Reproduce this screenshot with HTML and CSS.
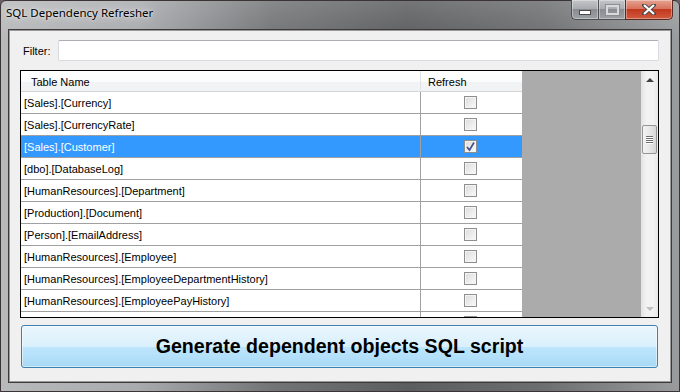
FILE: index.html
```html
<!DOCTYPE html>
<html>
<head>
  <meta charset="UTF-8">
  <title>SQL Dependency Refresher</title>
  <link rel="stylesheet" href="styles.css">
</head>
<body>
  <div class="window">
    <div class="titlebar">
      <span class="title">SQL Dependency Refresher</span>
      <div class="controls">
        <span class="ctl ctl-min"><i></i></span>
        <span class="ctl ctl-max"><i></i></span>
        <span class="ctl ctl-close">
          <svg width="14" height="11" viewBox="0 0 14 11">
            <path d="M2 1 L12 10 M12 1 L2 10" stroke="#4a4a4a" stroke-width="4" stroke-linecap="square"/>
            <path d="M2 1 L12 10 M12 1 L2 10" stroke="#fff" stroke-width="2.2"/>
          </svg>
        </span>
      </div>
    </div>

    <div class="client">
      <div class="filter">
        <label class="filter-label">Filter:</label>
        <div class="filter-input"></div>
      </div>

      <div class="grid">
        <div class="grid-body">
          <div class="grid-cols">
            <div class="row head">
              <div class="cell name">Table Name</div>
              <div class="cell refresh">Refresh</div>
            </div>
            <div class="row"><div class="cell name">[Sales].[Currency]</div><div class="cell refresh"><span class="chk"></span></div></div>
            <div class="row"><div class="cell name">[Sales].[CurrencyRate]</div><div class="cell refresh"><span class="chk"></span></div></div>
            <div class="row selected"><div class="cell name">[Sales].[Customer]</div><div class="cell refresh"><span class="chk checked"><svg width="11" height="11" viewBox="0 0 11 11"><path d="M2 6 L4.5 9 L9 1.5" fill="none" stroke="#3d4f8c" stroke-width="1.6"/></svg></span></div></div>
            <div class="row"><div class="cell name">[dbo].[DatabaseLog]</div><div class="cell refresh"><span class="chk"></span></div></div>
            <div class="row"><div class="cell name">[HumanResources].[Department]</div><div class="cell refresh"><span class="chk"></span></div></div>
            <div class="row"><div class="cell name">[Production].[Document]</div><div class="cell refresh"><span class="chk"></span></div></div>
            <div class="row"><div class="cell name">[Person].[EmailAddress]</div><div class="cell refresh"><span class="chk"></span></div></div>
            <div class="row"><div class="cell name">[HumanResources].[Employee]</div><div class="cell refresh"><span class="chk"></span></div></div>
            <div class="row"><div class="cell name">[HumanResources].[EmployeeDepartmentHistory]</div><div class="cell refresh"><span class="chk"></span></div></div>
            <div class="row"><div class="cell name">[HumanResources].[EmployeePayHistory]</div><div class="cell refresh"><span class="chk"></span></div></div>
            <div class="row"><div class="cell name"></div><div class="cell refresh"><span class="chk"></span></div></div>
          </div>
          <div class="grid-empty"></div>
        </div>
        <div class="scrollbar">
          <span class="arrow arrow-up"></span>
          <div class="track">
            <span class="thumb"><i></i><i></i><i></i><i></i></span>
          </div>
          <span class="arrow arrow-down"></span>
        </div>
      </div>

      <button class="generate">Generate dependent objects SQL script</button>
    </div>
  </div>
</body>
</html>
```

FILE: styles.css
```css
html, body {
  margin: 0;
  padding: 0;
}
body {
  width: 680px;
  height: 392px;
  overflow: hidden;
  font-family: "Liberation Sans", Arial, sans-serif;
  background: #6a6262;
}

/* aero window frame */
.window {
  box-sizing: border-box;
  width: 680px;
  height: 392px;
  padding: 0 7px 8px 7px;
  border: 1px solid #3a3434;
  border-radius: 6px 6px 0 0;
  display: flex;
  flex-direction: column;
  background:
    linear-gradient(180deg, rgba(255,255,255,0.15) 0, rgba(0,0,0,0) 40px),
    linear-gradient(90deg, #b8b9bb 0, #a9abae 20%, #727476 40%, #5c5d5f 60%, #6d6e70 80%, #9a9b9d 100%);
}
.titlebar {
  height: 28px;
  display: flex;
  justify-content: space-between;
  align-items: flex-start;
}
.title {
  margin: 4px 0 0 -2px;
  font-family: "Noto Sans", "Open Sans", sans-serif;
  font-size: 11.5px;
  color: #000;
  text-shadow: 0 0 8px rgba(255,255,255,0.9), 0 0 3px rgba(255,255,255,0.8);
}
.controls {
  display: flex;
  margin-top: -1px;
  margin-right: -1px;
}
.ctl {
  box-sizing: border-box;
  height: 20px;
  display: flex;
  align-items: center;
  justify-content: center;
  border: 1px solid #4d4f52;
  border-top: none;
  background: linear-gradient(180deg, #c4c6c9 0, #a9acb0 45%, #898c90 50%, #9da0a4 100%);
  box-shadow: inset 0 0 0 1px rgba(255,255,255,0.35);
}
.ctl-min {
  width: 27px;
  border-radius: 0 0 0 5px;
  border-right: none;
}
.ctl-min i {
  width: 10px;
  height: 3px;
  margin-top: 5px;
  background: #fff;
  border: 1px solid #4a4a4a;
}
.ctl-max {
  width: 27px;
  border-right: none;
}
.ctl-max i {
  width: 9px;
  height: 6px;
  border: 2px solid #d8d9db;
  outline: 1px solid #8c8e91;
}
.ctl-close {
  width: 48px;
  border-radius: 0 0 5px 0;
  border-color: #5a2a24;
  background: linear-gradient(180deg, #e4a392 0, #d7735e 45%, #c1391f 50%, #d25a3e 100%);
}

/* client area */
.client {
  flex: 1;
  background: #f0f0f0;
  border: 1px solid #3e3a3a;
  box-shadow: inset 0 0 0 1px #9a9a9a;
  padding: 10px 12px 0 11px;
  display: flex;
  flex-direction: column;
}
.filter {
  display: flex;
  align-items: center;
  height: 21px;
}
.filter-label {
  width: 35px;
  padding-left: 3px;
  font-size: 11px;
  color: #000;
}
.filter-input {
  flex: 1;
  height: 19px;
  background: #fff;
  border: 1px solid #d7dadf;
  border-top-color: #abadb3;
  border-radius: 2px;
}

/* data grid */
.grid {
  margin-top: 9px;
  height: 246px;
  border: 1px solid #000;
  display: flex;
  overflow: hidden;
}
.grid-body {
  flex: 1;
  display: flex;
  overflow: hidden;
}
.grid-cols {
  width: 501px;
  background: #fff;
}
.grid-empty {
  flex: 1;
  background: #ababab;
}
.row {
  display: flex;
  height: 21px;
  border-bottom: 1px solid #a0a0a0;
  font-size: 11px;
  color: #000;
}
.row.head {
  height: 21px;
  border-bottom: none;
  background: linear-gradient(180deg, #ffffff 0, #fbfcfc 50%, #f2f3f4 51%, #f2f3f5 100%);
  box-shadow: inset 0 -1px 0 #d5d5d5;
}
.cell {
  display: flex;
  align-items: center;
}
.cell.name {
  width: 396px;
  padding-left: 3px;
  border-right: 1px solid #a0a0a0;
}
.cell.refresh {
  width: 101px;
  justify-content: center;
}
.head .cell.name {
  padding-left: 10px;
  width: 389px;
  border-right-color: #dfe2e6;
}
.head .cell.refresh {
  justify-content: flex-start;
  padding-left: 7px;
  width: 94px;
}
.row.selected {
  background: #3399ff;
  color: #fff;
}
.chk {
  box-sizing: border-box;
  width: 13px;
  height: 13px;
  border: 1px solid #8e8f8f;
  background: linear-gradient(135deg, #dcdcdc 0, #f4f4f4 80%, #fff 100%);
  box-shadow: inset 0 0 0 1px #f4f4f4;
  display: flex;
  align-items: center;
  justify-content: center;
  margin-left: -2px;
}
.chk.checked svg {
  display: block;
}

/* vertical scrollbar */
.scrollbar {
  width: 17px;
  display: flex;
  flex-direction: column;
  background: linear-gradient(90deg, #e3e3e3 0, #f2f2f2 30%, #f2f2f2 70%, #e8e8e8 100%);
}
.arrow {
  height: 17px;
  display: flex;
  align-items: center;
  justify-content: center;
}
.arrow::before {
  content: "";
  border-left: 4px solid transparent;
  border-right: 4px solid transparent;
}
.arrow-up::before {
  border-bottom: 4px solid #404040;
}
.arrow-down::before {
  border-top: 4px solid #c0c0c0;
}
.track {
  flex: 1;
  padding-top: 37px;
}
.thumb {
  box-sizing: border-box;
  display: flex;
  flex-direction: column;
  align-items: center;
  justify-content: center;
  gap: 1px;
  width: 15px;
  height: 29px;
  margin-left: 1px;
  border: 1px solid #959595;
  border-radius: 2px;
  background: linear-gradient(90deg, #f3f3f3 0, #e8e8e8 50%, #d6d6d6 100%);
}
.thumb i {
  width: 7px;
  height: 1px;
  background: #6f6f6f;
  box-shadow: 0 1px 0 #fff;
}

/* action button */
.generate {
  margin: 7px 1px 0 1px;
  height: 43px;
  border: 1px solid #3c7fb1;
  border-radius: 3px;
  background: linear-gradient(180deg, #eaf6fd 0, #d9f0fc 50%, #bee6fd 51%, #a7d9f5 100%);
  box-shadow: inset 0 0 0 1px rgba(255,255,255,0.5);
  font-family: "Liberation Sans", Arial, sans-serif;
  font-size: 19.6px;
  font-weight: bold;
  color: #000;
  padding: 0;
}
```
